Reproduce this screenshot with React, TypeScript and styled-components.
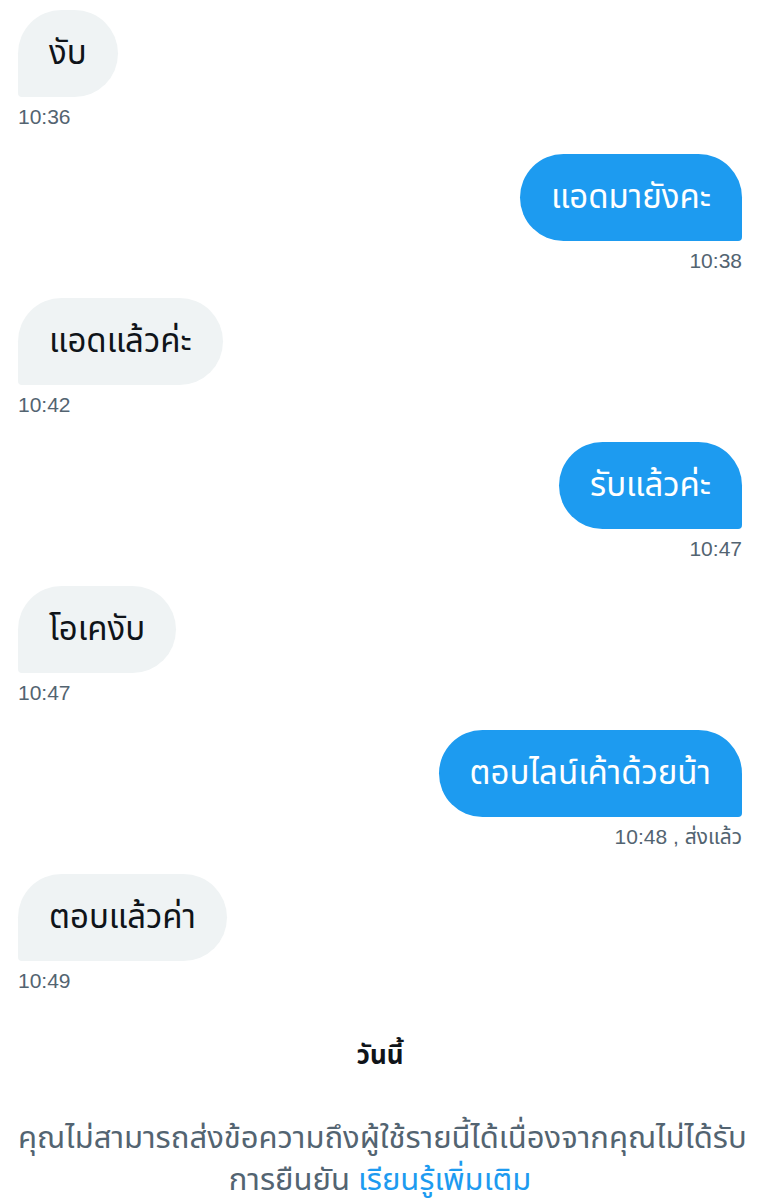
import React from 'react';
import styled, { createGlobalStyle } from 'styled-components';

const GlobalStyle = createGlobalStyle`
  body {
    margin: 0;
    background: #ffffff;
    font-family: "Noto Sans Thai", "Noto Sans", "DejaVu Sans", sans-serif;
  }
`;

const Page = styled.div`
  width: 760px;
  box-sizing: border-box;
  padding: 10px 18px 0 18px;
  display: flex;
  flex-direction: column;
  gap: 25px;
`;

const Group = styled.div<{ $out?: boolean }>`
  display: flex;
  flex-direction: column;
  align-items: ${(p) => (p.$out ? 'flex-end' : 'flex-start')};
  gap: 8px;
`;

const Bubble = styled.div<{ $out?: boolean }>`
  box-sizing: border-box;
  height: 87px;
  display: flex;
  align-items: center;
  padding: 0 31px;
  font-size: 33px;
  color: ${(p) => (p.$out ? '#ffffff' : '#0f1419')};
  background: ${(p) => (p.$out ? '#1d9bf0' : '#eff3f4')};
  border-radius: ${(p) => (p.$out ? '44px 44px 4px 44px' : '44px 44px 44px 4px')};
`;

const Time = styled.div`
  font-family: "Liberation Sans", "Noto Sans Thai", sans-serif;
  font-size: 21px;
  line-height: 24px;
  color: #536471;
`;

const DayLabel = styled.div`
  margin-top: 20px;
  text-align: center;
  font-size: 26px;
  line-height: 36px;
  font-weight: 700;
  color: #0f1419;
`;

const Notice = styled.p`
  margin: 19px 0 0 0;
  text-align: center;
  font-size: 31px;
  line-height: 42px;
  color: #536471;
  white-space: nowrap;
`;

const LearnMore = styled.a`
  color: #1d9bf0;
  text-decoration: none;
`;

type Msg = { text: string; time: string; out?: boolean };

const messages: Msg[] = [
  { text: 'งับ', time: '10:36' },
  { text: 'แอดมายังคะ', time: '10:38', out: true },
  { text: 'แอดแล้วค่ะ', time: '10:42' },
  { text: 'รับแล้วค่ะ', time: '10:47', out: true },
  { text: 'โอเคงับ', time: '10:47' },
  { text: 'ตอบไลน์เค้าด้วยน้า', time: '10:48 , ส่งแล้ว', out: true },
  { text: 'ตอบแล้วค่า', time: '10:49' },
];

const App: React.FC = () => {
  return (
    <>
      <GlobalStyle />
      <Page>
        {messages.map((m, i) => (
          <Group key={i} $out={m.out}>
            <Bubble $out={m.out}>{m.text}</Bubble>
            <Time>{m.time}</Time>
          </Group>
        ))}
        <DayLabel>วันนี้</DayLabel>
        <Notice>
          คุณไม่สามารถส่งข้อความถึงผู้ใช้รายนี้ได้เนื่องจากคุณไม่ได้รับ
          <br />
          การยืนยัน <LearnMore href="#">เรียนรู้เพิ่มเติม</LearnMore>
        </Notice>
      </Page>
    </>
  );
};

export default App;
